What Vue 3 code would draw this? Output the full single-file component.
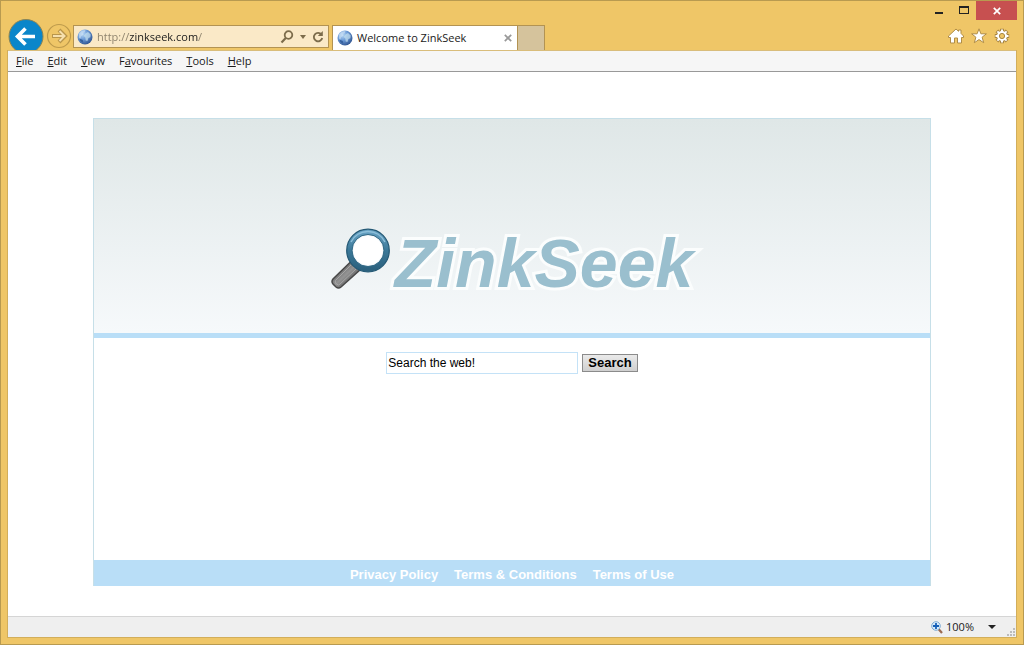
<script setup>
import { ref } from 'vue'

const address = ref('http://zinkseek.com/')
const query = ref('Search the web!')

const menus = [
  { before: '', key: 'F', after: 'ile' },
  { before: '', key: 'E', after: 'dit' },
  { before: '', key: 'V', after: 'iew' },
  { before: 'F', key: 'a', after: 'vourites' },
  { before: '', key: 'T', after: 'ools' },
  { before: '', key: 'H', after: 'elp' },
]

const links = ['Privacy Policy', 'Terms & Conditions', 'Terms of Use']
</script>

<template>
  <div class="window">
    <svg class="defs" width="0" height="0" aria-hidden="true">
      <defs>
        <radialGradient id="globeFill" cx="0.35" cy="0.3" r="0.8">
          <stop offset="0" stop-color="#b9d8f5" />
          <stop offset="0.45" stop-color="#6b9ad6" />
          <stop offset="1" stop-color="#274a86" />
        </radialGradient>
        <symbol id="globe" viewBox="0 0 16 16">
          <circle cx="8" cy="8" r="7.5" fill="url(#globeFill)" />
          <path d="M2 4.5 5 1.5 8.5 1l-.8 2.2-2 .8.5 1.7-2 1.5-.7 2.3-1.5-.8z" fill="#cfe3f5" opacity=".6" />
          <path d="M8.5 4.5 11 3l2.7 2.5-.3 2.8-2 .6-1 3-1.700-.4-.4-3-1.600-1.600z" fill="#c5e0ee" opacity=".7" />
          <path d="M3.5 10l2.3 1 .5 2.8C4.500 13.200 3 12 2.500 10.500z" fill="#35619f" />
        </symbol>
      </defs>
    </svg>

    <header class="chrome">
      <div class="caption">
        <button class="cap min" aria-label="Minimise">
          <svg width="8" height="12" viewBox="0 0 8 12"><path d="M0 8h8v2H0z" fill="#222" /></svg>
        </button>
        <button class="cap max" aria-label="Maximise">
          <svg width="10" height="8" viewBox="0 0 10 8"><path d="M0 0h10v8H0zM1 2v5h8V2z" fill="#222" fill-rule="evenodd" /></svg>
        </button>
        <button class="cap close" aria-label="Close">
          <svg width="8" height="8" viewBox="0 0 8 8"><path d="M.8.8l6.400 6.400M7.200.8L.8 7.200" stroke="#fff" stroke-width="1.700" /></svg>
        </button>
      </div>

      <div class="toolbar">
        <button class="back" aria-label="Back">
          <svg width="36" height="36" viewBox="0 0 36 36">
            <circle cx="18" cy="17.500" r="17" fill="#0a86ca" stroke="#8a8455" />
            <path d="M27 17.500H10M17.500 9.500L9.500 17.500l8 8" fill="none" stroke="#fff" stroke-width="3.600" />
          </svg>
        </button>
        <button class="forward" aria-label="Forward">
          <svg width="26" height="26" viewBox="0 0 26 26">
            <circle cx="13" cy="13" r="11.500" fill="none" stroke="#bd9a4c" stroke-width="1.200" />
            <path d="M6 13h12M13 7l6 6-6 6" fill="none" stroke="#b9964b" stroke-width="4" />
            <path d="M7 13h11M13.500 8l5 5-5 5" fill="none" stroke="#f6e0ad" stroke-width="2" />
          </svg>
        </button>
        <div class="address">
          <svg class="globe" width="16" height="16"><use href="#globe" /></svg>
          <input v-model="address" class="url" type="text" aria-label="Address" />
          <button aria-label="Search">
            <svg width="14" height="14" viewBox="0 0 14 14"><circle cx="8.500" cy="5" r="3.800" fill="none" stroke="#7c6c4b" stroke-width="1.800" /><path d="M5.800 8L1.500 12.500" stroke="#7c6c4b" stroke-width="2.200" /></svg>
          </button>
          <button aria-label="Show address list">
            <svg width="6" height="4" viewBox="0 0 6 4"><path d="M0 0h6L3 4z" fill="#7c6c4b" /></svg>
          </button>
          <button aria-label="Refresh">
            <svg width="12" height="14" viewBox="0 0 12 14"><path d="M9.500 4.700A4.200 4.200 0 1 0 10.200 8" fill="none" stroke="#7c6c4b" stroke-width="1.800" /><path d="M10.800 1v5H5.800z" fill="#7c6c4b" /></svg>
          </button>
        </div>
        <div class="tab">
          <svg class="globe" width="16" height="16"><use href="#globe" /></svg>
          <span class="title">Welcome to ZinkSeek</span>
          <button aria-label="Close tab">
            <svg width="8" height="8" viewBox="0 0 8 8"><path d="M.8.8l6.400 6.400M7.200.8L.8 7.200" stroke="#999" stroke-width="1.700" /></svg>
          </button>
        </div>
        <button class="newtab" aria-label="New tab"></button>
        <div class="tools">
          <button aria-label="Home">
            <svg width="16" height="16" viewBox="0 0 16 16"><path d="M8 1l2.500 2.300V2h2.500v3.400L15.500 8v1.500H13.500V15H9.500v-5h-3v5H2.500V9.500H.5V8z" fill="#fff" stroke="#b08d47" stroke-linejoin="round" /></svg>
          </button>
          <button aria-label="Favourites">
            <svg width="16" height="16" viewBox="0 0 16 16"><path d="M8 .8l1.900 5h5.500l-4.300 3.400 1.600 5.500L8 11.600l-4.700 3.100 1.600-5.500L.6 5.800h5.500z" fill="#fff" stroke="#b08d47" stroke-linejoin="round" /></svg>
          </button>
          <button aria-label="Tools">
            <svg width="16" height="16" viewBox="0 0 16 16">
              <path d="M8 .8v14.400M.8 8h14.400M2.900 2.900l10.200 10.200M13.100 2.900L2.900 13.100" stroke="#a88643" stroke-width="4" />
              <circle cx="8" cy="8" r="5.800" fill="#a88643" />
              <path d="M8 1.500v13M1.500 8h13M3.400 3.400l9.200 9.200M12.600 3.400l-9.200 9.200" stroke="#fff" stroke-width="2" />
              <circle cx="8" cy="8" r="5" fill="#fff" />
              <circle cx="8" cy="8" r="2.600" fill="#efc667" stroke="#a88643" />
            </svg>
          </button>
        </div>
      </div>
    </header>

    <div class="client">
      <nav class="menubar" aria-label="Menu bar">
        <button v-for="m in menus" :key="m.after">{{ m.before }}<u>{{ m.key }}</u>{{ m.after }}</button>
      </nav>

      <main class="page">
        <div class="site">
          <div class="banner">
            <svg class="lens" width="60" height="62" viewBox="0 0 60 62" aria-hidden="true">
              <defs>
                <linearGradient id="rim" x1="0" y1="0" x2="0" y2="1">
                  <stop offset="0" stop-color="#65a0c2" />
                  <stop offset="0.5" stop-color="#3b7898" />
                  <stop offset="1" stop-color="#2c627f" />
                </linearGradient>
                <linearGradient id="grip" x1="0" y1="0" x2="1" y2="1">
                  <stop offset="0.2" stop-color="#5b5b5b" />
                  <stop offset="0.5" stop-color="#949494" />
                  <stop offset="0.8" stop-color="#474747" />
                </linearGradient>
                <radialGradient id="glass">
                  <stop offset="0.75" stop-color="#fff" />
                  <stop offset="1" stop-color="#d5e3f0" />
                </radialGradient>
              </defs>
              <path d="M21 32.500L2 51q-2 2.500 0 5l3 3q2.500 2 5 0L30 41z" fill="url(#grip)" stroke="#484848" stroke-width="1.500" />
              <path d="M20 37L4.500 52.500q-1 1.500 1 3.500t3.500 0L25 41" fill="none" stroke="#a6a6a6" stroke-width="1" />
              <circle cx="37" cy="22.500" r="18.500" fill="url(#glass)" stroke="url(#rim)" stroke-width="5.500" />
              <circle cx="37" cy="22.500" r="21.300" fill="none" stroke="#235874" stroke-width="1.200" />
              <circle cx="37" cy="22.500" r="16" fill="none" stroke="#316985" stroke-width="1" />
              <path d="M20 14a19 19 0 0 1 34 0" fill="none" stroke="#8dbfd9" stroke-width="1.500" />
            </svg>
            <h1>ZinkSeek</h1>
          </div>

          <form class="search" @submit.prevent>
            <input v-model="query" type="text" aria-label="Search the web" />
            <button type="submit">Search</button>
          </form>

          <footer class="links">
            <a v-for="l in links" :key="l" href="#">{{ l }}</a>
          </footer>
        </div>
      </main>

      <div class="status">
        <button class="zoom">
          <svg width="12" height="13" viewBox="0 0 12 13"><path d="M7.500 8l3.500 4" stroke="#9b6a50" stroke-width="2.200" /><circle cx="5" cy="5" r="4.300" fill="#d8ebfa" stroke="#7eabd3" /><path d="M5 2v6M2 5h6" stroke="#1660b8" stroke-width="1.800" /></svg>
          <span>100%</span>
          <svg class="drop" width="8" height="4" viewBox="0 0 8 4"><path d="M0 0h8L4 4z" fill="#222" /></svg>
        </button>
        <svg class="grip" width="8" height="8" viewBox="0 0 8 8"><path d="M6 0h2v2H6zM3 3h2v2H3zM6 3h2v2H6zM0 6h2v2H0zM3 6h2v2H3zM6 6h2v2H6z" fill="#bcbcbc" /></svg>
      </div>
    </div>
  </div>
</template>

<style>
body {
  margin: 0;
}
</style>

<style scoped>
* {
  box-sizing: border-box;
}
button {
  display: flex;
  align-items: center;
  justify-content: center;
  padding: 0;
  border: 0;
  background: none;
  color: inherit;
  font: inherit;
}
svg {
  display: block;
  flex: none;
}
.defs {
  position: absolute;
}
.window {
  display: flex;
  flex-direction: column;
  min-height: 100vh;
  padding: 0 6px 6px;
  border: 1px solid #b89a50;
  background: #efc667;
  color: #1a1a1a;
  font: 11px/16px "Open Sans", "Noto Sans", sans-serif;
}
.caption {
  display: flex;
  justify-content: flex-end;
  height: 18px;
}
.cap {
  width: 25px;
}
.cap.close {
  width: 41px;
  height: 19px;
  background: #c75050;
}
.toolbar {
  display: flex;
  align-items: flex-end;
  height: 31px;
}
.back {
  align-self: flex-start;
  align-items: flex-start;
  width: 36px;
  height: 31px;
  margin-left: 1px;
  overflow: hidden;
}
.forward {
  margin: 0 1px 1px 2px;
}
.address {
  display: flex;
  align-items: center;
  width: 256px;
  height: 23px;
  margin-bottom: 2px;
  padding: 0 4px 0 3px;
  gap: 6px;
  border: 1px solid #b39352;
  background: #fae9c7;
}
.url {
  flex: 1;
  min-width: 0;
  height: 18px;
  margin-left: -2px;
  padding: 0;
  border: 0;
  outline: 0;
  background: linear-gradient(90deg, #8b806a 32px, #1a1a1a 32px, #1a1a1a 101px, #8b806a 101px);
  background-clip: text;
  color: transparent;
  caret-color: #1a1a1a;
  font: inherit;
}
.tab {
  display: flex;
  align-items: center;
  width: 186px;
  height: 25px;
  margin-left: 3px;
  padding: 0 5px 0 4px;
  gap: 4px;
  border: 1px solid #b39352;
  border-bottom: 0;
  background: #fff;
}
.title {
  flex: 1;
  white-space: nowrap;
}
.newtab {
  width: 27px;
  height: 25px;
  border: 1px solid #b39352;
  border-width: 1px 1px 0 0;
  background: #d5c39c;
}
.tools {
  display: flex;
  gap: 7px;
  margin: 0 7px 6px auto;
}
.client {
  display: flex;
  flex: 1;
  flex-direction: column;
  border: 1px solid #d2ae5b;
  border-width: 0 1px 1px;
  background: #fff;
}
.menubar {
  display: flex;
  gap: 14px;
  height: 22px;
  padding: 0 8px;
  border-top: 1px solid #d9bd7b;
  border-bottom: 1px solid #999;
  background: #f6f6f6;
}
.page {
  display: flex;
  flex: 1;
  padding: 46px 85px 30px;
  font-family: "Liberation Sans", Arial, sans-serif;
}
.site {
  display: flex;
  flex: 1;
  flex-direction: column;
  border: 1px solid #c6dfe8;
  border-bottom: 0;
}
.banner {
  display: flex;
  align-items: flex-start;
  justify-content: center;
  gap: 4px;
  min-height: 219px;
  padding-top: 109px;
  border-bottom: 5px solid #b9def7;
  background: linear-gradient(#dfe7e7, #f6f9fb);
}
h1 {
  margin: 0;
  color: #9abfce;
  font: italic bold 68px/70px "Liberation Sans", Arial, sans-serif;
  -webkit-text-stroke: 6px #fbfdfd;
  stroke-linejoin: round;
  paint-order: stroke fill;
}
.search {
  display: flex;
  align-items: center;
  justify-content: center;
  gap: 4px;
  padding-top: 14px;
  color: #000;
  font-size: 13px;
}
.search input {
  width: 192px;
  height: 22px;
  padding: 0 1px;
  border: 1px solid #c4e2f7;
  background: #fff;
  color: #000;
  font: 12px "Liberation Sans", Arial, sans-serif;
}
.search button {
  height: 18px;
  padding: 0 5px;
  border: 1px solid #8b8b8b;
  background: linear-gradient(#eaeaea, #cfcfcf);
  font-weight: bold;
}
.links {
  display: flex;
  align-items: center;
  justify-content: center;
  gap: 16px;
  height: 26px;
  margin-top: auto;
  padding-top: 4px;
  background: #b9def7;
}
.links a {
  color: #fff;
  font-size: 13px;
  font-weight: bold;
  text-decoration: none;
}
.status {
  display: flex;
  align-items: center;
  justify-content: flex-end;
  height: 21px;
  padding-right: 1px;
  border-top: 1px solid #d5d5d5;
  background: #efefef;
}
.zoom {
  gap: 3px;
}
.drop {
  margin-left: 11px;
}
.status .grip {
  align-self: flex-end;
  margin: 0 0 1px 11px;
}
</style>
